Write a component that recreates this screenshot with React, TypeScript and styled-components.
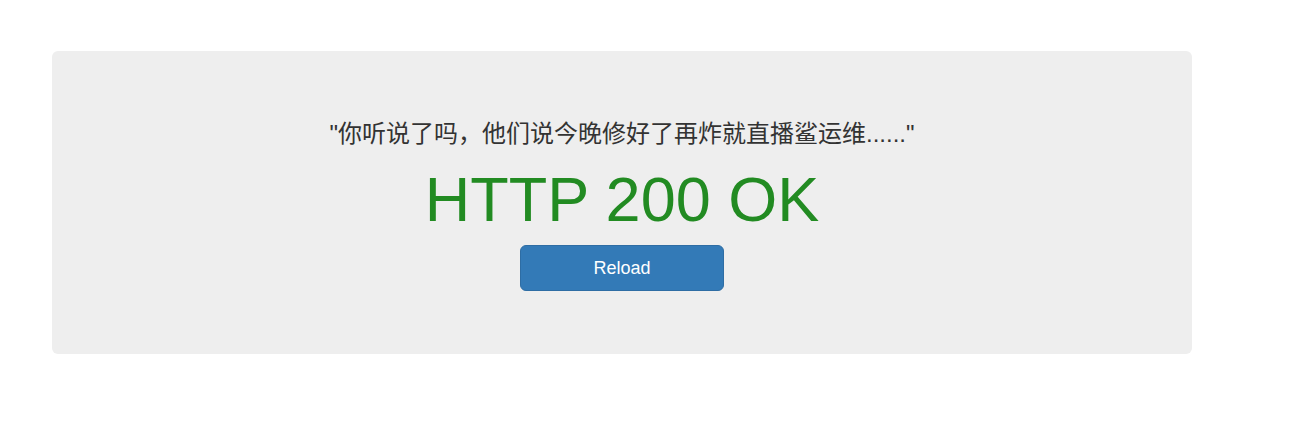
import React from "react";
import styled, { createGlobalStyle } from "styled-components";

const Global = createGlobalStyle`
  html, body { margin: 0; padding: 0; background: #fff; }
  body { font-family: "Liberation Sans", "Noto Sans CJK SC", Arial, sans-serif; color: #333; }
  * { box-sizing: border-box; }
`;

const Page = styled.div`
  padding: 51px 0 0 52px;
`;

const Jumbotron = styled.div`
  width: 1140px;
  height: 303px;
  background: #eeeeee;
  border-radius: 6px;
  padding: 68px 0 0;
  display: flex;
  flex-direction: column;
  align-items: center;
  text-align: center;
`;

const Quote = styled.p`
  margin: 0 0 15px;
  font-size: 24px;
  line-height: 30px;
  color: #333;
  font-family: "Liberation Sans", "Noto Sans CJK SC", sans-serif;
`;

const Status = styled.h1<{ $color: string }>`
  margin: 0 0 11px;
  font-size: 63px;
  line-height: 70px;
  font-weight: 400;
  color: ${(p) => p.$color};
  font-family: "Liberation Sans", Arial, sans-serif;
`;

const Button = styled.button`
  width: 204px;
  height: 46px;
  background: #337ab7;
  border: 1px solid #2e6da4;
  border-radius: 6px;
  color: #fff;
  font-size: 18px;
  font-family: "Liberation Sans", Arial, sans-serif;
  cursor: pointer;
  padding: 0;
`;

export default function App() {
  return (
    <Page>
      <Global />
      <Jumbotron>
        <Quote>"你听说了吗，他们说今晚修好了再炸就直播鲨运维......"</Quote>
        <Status $color="#228b22">HTTP 200 OK</Status>
        <Button>Reload</Button>
      </Jumbotron>
    </Page>
  );
}
